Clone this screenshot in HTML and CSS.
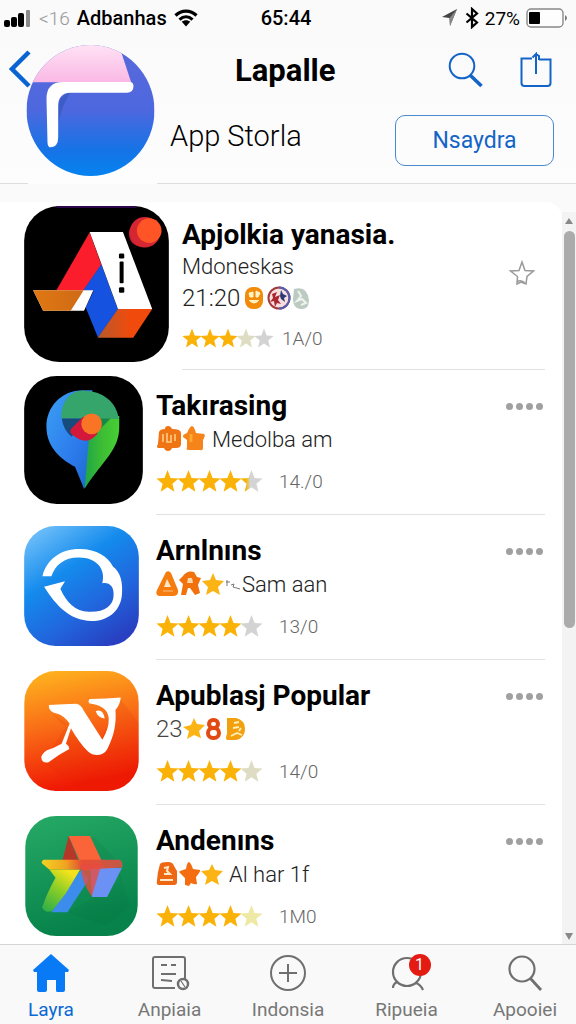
FILE: index.html
```html
<!DOCTYPE html>
<html lang="id">
  <head>
    <meta charset="UTF-8" />
    <meta name="viewport" content="width=device-width, initial-scale=1.0" />
    <title>Lapalle</title>
    <link rel="stylesheet" href="styles.css">
  </head>

  <body>
    <svg class="sprite" aria-hidden="true">
      <defs>
        <linearGradient id="half"><stop offset="0.250" stop-color="#f5b400" /><stop offset="0.450" stop-color="#d4d4d4" /></linearGradient>
        <symbol id="star" viewBox="0 0 22 22">
          <path d="M11 0l2.900 7.600 7.700.6-5.900 5 1.900 7.600L11 16.600l-6.600 4.200 1.900-7.600L.4 8.200l7.700-.6z" />
        </symbol>
      </defs>
    </svg>

    <div class="status-bar">
      <div class="status-left">
        <svg width="28" height="18" viewBox="0 0 28 18">
          <rect x="0" y="11" width="6" height="7" rx="2" />
          <rect x="7" y="8" width="6" height="10" rx="2" />
          <rect x="14" y="4" width="6" height="14" rx="2" />
          <rect x="22" y="1" width="4" height="17" rx="1" fill="#8a8a8a" />
        </svg>
        <span class="signal">&lt;16</span>
        <span class="carrier">Adbanhas</span>
        <svg width="24" height="18" viewBox="0 0 24 18" fill="none" stroke="#000" stroke-width="3.200">
          <path d="M1.500 6.500C7.500.7 16.500.7 22.500 6.500" />
          <path d="M5.500 10.600c4-3.600 9-3.600 13 0" />
          <path d="M7.800 12.800L12 17.500l4.200-4.700c-2.500-2-5.900-2-8.400 0z" fill="#000" stroke="none" />
        </svg>
      </div>
      <div class="clock">65:44</div>
      <div class="status-right">
        <svg width="18" height="20" viewBox="0 0 18 20">
          <path d="M1 9L16 1 9 18 8.500 10z" fill="#444" /><path d="M16 1L9 18l-.5-8z" fill="#888" />
        </svg>
        <svg width="14" height="22" viewBox="0 0 14 22" fill="none" stroke="#000" stroke-width="2.200">
          <path d="M1.500 6.500l10.500 9-5 4.500V2l5 4.500-10.500 9" />
        </svg>
        <span>27%</span>
        <svg width="42" height="20" viewBox="0 0 42 20">
          <rect x="1" y="1" width="36" height="18" rx="4" fill="#fdfdfd" stroke="#888" stroke-width="1.400" />
          <rect x="3" y="4" width="11" height="12" rx="1" />
          <path d="M39 7q4 3 0 6z" fill="#777" />
        </svg>
      </div>
    </div>

    <header>
      <div class="brand">
        <svg class="avatar" viewBox="80 134 384 393">
          <defs>
            <linearGradient id="av" x1="0" y1="0" x2="0" y2="1">
              <stop offset="0.200" stop-color="#5568dc" /><stop offset="0.500" stop-color="#4d68df" /><stop offset="0.800" stop-color="#1673e6" /><stop offset="1" stop-color="#0583f0" />
            </linearGradient>
            <linearGradient id="pink" x1="0" y1="0" x2="0" y2="1">
              <stop offset="0" stop-color="#ffe2f4" /><stop offset="1" stop-color="#fab8e5" />
            </linearGradient>
            <clipPath id="avclip"><ellipse cx="272" cy="330.500" rx="192" ry="196.500" /></clipPath>
          </defs>
          <g clip-path="url(#avclip)">
            <rect x="80" y="134" width="384" height="393" fill="url(#av)" />
            <path d="M80 134h277l37 112H80z" fill="url(#pink)" />
            <path d="M177 315q0-28 34-38l-16 30q-10 20-19 60z" fill="#3558bd" opacity="0.700" />
          </g>
          <path d="M140 295q0-50 50-50h198q12-2 13 12 0 20-20 20H210q-35 2-35 40v95q0 26-22 29-9 0-10-14z" fill="#fff" />
        </svg>
        <button class="back" aria-label="Back">
          <svg width="22" height="38" viewBox="0 0 22 38" fill="none" stroke="#0a63d2" stroke-width="4.500"><path d="M20 2L3 19l17 17" /></svg>
        </button>
      </div>
      <div class="header-main">
        <div class="nav-row">
          <h1>Lapalle</h1>
          <div class="actions">
            <button aria-label="Search">
              <svg width="36" height="36" viewBox="0 0 36 36" fill="none" stroke="#1464c8">
                <circle cx="14" cy="14" r="12.300" stroke-width="2" /><path d="M22.500 23.500l11 10.500" stroke-width="3.600" />
              </svg>
            </button>
            <button aria-label="Share">
              <svg width="32" height="36" viewBox="0 0 32 36" fill="none" stroke="#1464c8" stroke-width="2">
                <path d="M12 6.500H1.500V31q0 3 3 3h23q3 0 3-3V7.500H19" /><path d="M16 22V2l-3.500 3.500M16 2l3 2v4" />
              </svg>
            </button>
          </div>
        </div>
        <div class="profile-row">
          <p>App Storla</p>
          <button class="outline-btn">Nsaydra</button>
        </div>
      </div>
    </header>

    <main>
      <ul class="app-list">
        <li class="app featured">
          <svg class="app-icon" viewBox="70 33 435 469">
            <defs>
              <linearGradient id="or"><stop offset="0" stop-color="#b65a2c" /><stop offset="0.600" stop-color="#f04a0c" /></linearGradient>
              <linearGradient id="gold"><stop offset="0" stop-color="#e07812" /><stop offset="1" stop-color="#cf6a16" /></linearGradient>
            </defs>
            <rect x="70" y="33" width="435" height="469" rx="105" />
            <path d="M167 36h240" stroke="#3b0b63" stroke-width="4" />
            <path d="M267 112l35 98-54 78h-82z" fill="#fb1d2c" />
            <path d="M302 208l50 136-60 84-37-90 24-50h-32z" fill="#1552e0" />
            <path d="M267 111h100l88 232H352z" fill="#fff" />
            <path d="M352 343h103l-57 86H291z" fill="url(#or)" />
            <path d="M97 286h181l-28 62H127z" fill="#fff" />
            <path d="M97 286h152l-39 62h-83z" fill="url(#gold)" />
            <rect x="355" y="176" width="16" height="15" rx="4" />
            <rect x="357" y="200" width="12" height="65" rx="3" />
            <rect x="355" y="277" width="16" height="17" rx="4" />
            <path d="M440 76q-56 8-55 40 0 38 45 41z" fill="#c3153c" />
            <circle cx="433" cy="112" r="46" fill="#d52632" />
            <circle cx="446" cy="107" r="37" fill="#ff5526" />
          </svg>
          <div class="app-body">
            <div class="info">
              <h2>Apjolkia yanasia.</h2>
              <p class="meta">Mdoneskas</p>
              <p class="meta second">21:20
                <svg width="72" height="24" viewBox="-4 0 72 24">
                  <rect x="1" y="1" width="18" height="22" rx="8" fill="#f28a0a" />
                  <path d="M5 7l4-1v5H6zM12 5l4 2-2 4h-2zM5 14q5 6 10 0" fill="#fff3c4" stroke="#fff3c4" />
                  <circle cx="35" cy="12" r="10.500" fill="#f5dfe0" stroke="#a33a3c" stroke-width="2" />
                  <path d="M35 1.500a10.500 10.500 0 0 1 0 21" fill="none" stroke="#555faf" stroke-width="2" />
                  <path d="M28 8l5-2-2 5 5-2-2 5 3 4-4-1-2 4-1-6-4 1 3-4z" fill="#ab2730" /><path d="M37 4l2 4 4 2-3 2 1 4-4-3-1-3z" fill="#2c3978" />
                  <path d="M50 3q13-4 15 11 0 10-9 9-7-1-7-10z" fill="#bccbc1" />
                  <path d="M54 5l3 5-4 5 5-2 4 4-5 2" fill="none" stroke="#eef3ee" stroke-width="2" />
                </svg>
              </p>
              <div class="rating">
                <span class="stars" role="img" aria-label="3 of 5"><svg><use href="#star" /></svg><svg><use href="#star" /></svg><svg><use href="#star" /></svg><svg class="pale"><use href="#star" /></svg><svg class="off"><use href="#star" /></svg></span>
                <span>1A/0</span>
              </div>
            </div>
            <button class="fav" aria-label="Favourite">
              <svg width="26" height="26" viewBox="0 0 26 26" fill="none" stroke="#999" stroke-width="1.500">
                <path d="M13 2l3 8.500 8.500.5-6.500 5.500-1 7.500-5-2-4 2 .5-7.500L1.500 11l8.500-.5z" /><path d="M8 22q4-3 8 1" />
              </svg>
            </button>
          </div>
        </li>

        <li class="app large">
          <svg class="app-icon" viewBox="70 30 357 385">
            <defs>
              <linearGradient id="pinblue" x1="0" y1="0" x2="1" y2="1"><stop offset="0" stop-color="#3aa0f4" /><stop offset="0.600" stop-color="#2d7bec" /><stop offset="1" stop-color="#1a66cc" /></linearGradient>
              <linearGradient id="pingreen" x1="0" y1="0" x2="1" y2="0"><stop offset="0" stop-color="#1ea548" /><stop offset="0.500" stop-color="#3dbd34" /><stop offset="1" stop-color="#48cf35" /></linearGradient>
            </defs>
            <rect x="70" y="30" width="357" height="385" rx="98" />
            <path d="M248 73c-70 0-111 54-111 108 0 65 45 100 86 122l27 66 25-40V73z" fill="url(#pinblue)" />
            <path d="M264 225l-12 144c55-85 104-115 104-186V150H265z" fill="url(#pingreen)" />
            <path d="M182 158c-3-40 22-85 66-84 60 0 100 35 107 85z" fill="#35a56b" />
            <path d="M183 158h70l-40 55q-25-20-30-55z" fill="#174b7b" />
            <path d="M250 158h80l-45 45z" fill="#178747" />
            <path d="M213 187l35-35 43 50c-18 25-45 34-79 2-5-7-5-10 1-17z" fill="#d3183b" />
            <circle cx="273" cy="174" r="31" fill="#fa7426" />
          </svg>
          <div class="app-body">
            <div class="info">
              <h2>Takırasing</h2>
              <p class="meta">
                <svg width="50" height="26" viewBox="0 0 50 26">
                  <path d="M3 6q1-3 6-3 0-3 3-3t4 3q9 0 9 4v11q0 4-5 4h-4q-1 3-4 3t-4-3H2q-2-1 0-4z" fill="#ee7414" />
                  <path d="M7 8v8M11 7v9h4V9M19 8v7" stroke="#ffd08c" stroke-width="1.500" fill="none" />
                  <path d="M36 0q2 0 4 7l8 1q2 1-1 6v8q0 3-3 2H32q-2 0-1-3v-7l-4-3q-1-2 4-4 3-7 5-7z" fill="#f6841b" />
                  <path d="M35 8v8" stroke="#fba92f" stroke-width="3" />
                </svg>
                <span class="gap-text">Medolba am</span>
              </p>
              <div class="rating">
                <span class="stars" role="img" aria-label="4 of 5"><svg><use href="#star" /></svg><svg><use href="#star" /></svg><svg><use href="#star" /></svg><svg><use href="#star" /></svg><svg class="half"><use href="#star" /></svg></span>
                <span>14./0</span>
              </div>
            </div>
            <button class="more" aria-label="More"><i></i><i></i><i></i><i></i></button>
          </div>
        </li>

        <li class="app">
          <svg class="app-icon" viewBox="72 32 345 361">
            <defs><linearGradient id="sky" x1="0.100" y1="0" x2="0.750" y2="1"><stop offset="0" stop-color="#75c2fa" /><stop offset="0.380" stop-color="#148bed" /><stop offset="0.700" stop-color="#2166dd" /><stop offset="1" stop-color="#283fc1" /></linearGradient></defs>
            <rect x="72" y="32" width="345" height="361" rx="94" fill="url(#sky)" />
            <path d="M127 183C140 130 185 100 240 101c50 0 85 24 99 53 25 18 30 52 27 86-5 50-45 78-92 78-65-2-105-45-142-103l63-17-14 23c18 41 45 68 85 69 48 2 75-20 75-50 2-25-12-40-34-36 12-44-20-77-69-77-45-1-72 22-84 56z" fill="#fff" />
          </svg>
          <div class="app-body">
            <div class="info">
              <h2>Arnlnıns</h2>
              <p class="meta">
                <svg width="86" height="26" viewBox="0 0 86 26">
                  <path d="M10 1q3-2 5 1l7 17q1 6-5 6H3q-4-1-2-6z" fill="#f57c0e" /><path d="M11 8l4 8H8z" fill="#ffe7c8" /><path d="M7 20h10" stroke="#ffc184" />
                  <path d="M27 5q4-6 11-4l3 5 4 1-3 7 2 8-5 2-5-7h-2l-2 7h-5l2-11-4-4z" fill="#f1710d" /><path d="M32 7h4l1 5h-6z" fill="#ffd7a6" />
                  <path d="M57 2l3 7 8 1-6 6 2 8-7-4-7 4 2-8-6-6 8-1z" fill="#fbb414" />
                  <path d="M71 9v6M70 11h4M75 14l3-1-1 3 7 2" stroke="#777" fill="none" />
                </svg>
                <span>Sam aan</span>
              </p>
              <div class="rating">
                <span class="stars" role="img" aria-label="4 of 5"><svg><use href="#star" /></svg><svg><use href="#star" /></svg><svg><use href="#star" /></svg><svg><use href="#star" /></svg><svg class="off"><use href="#star" /></svg></span>
                <span>13/0</span>
              </div>
            </div>
            <button class="more" aria-label="More"><i></i><i></i><i></i><i></i></button>
          </div>
        </li>

        <li class="app">
          <svg class="app-icon" viewBox="72 35 343 359">
            <defs>
              <linearGradient id="fire" x1="0" y1="0" x2="0.200" y2="1"><stop offset="0" stop-color="#ffb81f" /><stop offset="0.500" stop-color="#f96b16" /><stop offset="1" stop-color="#f01904" /></linearGradient>
              <clipPath id="fireclip"><rect x="72" y="35" width="343" height="359" rx="94" /></clipPath>
            </defs>
            <g clip-path="url(#fireclip)">
              <rect x="72" y="35" width="343" height="359" fill="url(#fire)" />
              <path d="M148 158l55 35-75 113 115 90h172V190l-55-70-80 160z" fill="#df2500" opacity="0.120" />
            </g>
            <path d="M146 137q45-3 82-4 15 3 22 20l56 88q20-35 19-63-2-39-57-46-7-5 0-13 50-1 93-5-2 22-16 38c3 35-2 75-25 118-12 20-40 22-57 6q-27-27-51-70l-15 47q9 5 10 15-35 18-62 40-20 4-22-15 2-10 17-21 20-5 44-19l24-61q-18-24-36-29-25-4-26-20z" fill="#fff" />
            <path d="M286 155q22-8 27 22-22-2-27-22z" fill="#fff" />
          </svg>
          <div class="app-body">
            <div class="info">
              <h2>Apublasj Popular</h2>
              <p class="meta muted">23
                <svg width="64" height="24" viewBox="0 0 64 24">
                  <path d="M11 1l3 6 8 1-6 6 2 7-7-3-7 4 2-8-6-4 8-2z" fill="#fbb414" />
                  <rect x="26" y="3" width="9" height="8" rx="4" fill="none" stroke="#e24a13" stroke-width="4" />
                  <rect x="25" y="11" width="11" height="10" rx="5" fill="none" stroke="#e24a13" stroke-width="4" />
                  <path d="M44 1h9q9 2 9 11t-9 11h-9q-2-2 0-6V6z" fill="#f2a00f" />
                  <path d="M51 6l5-1M50 11l6-1M48 19l6-3 5 2M56 14l2-3" stroke="#ffefb5" stroke-width="1.800" fill="none" />
                </svg>
              </p>
              <div class="rating">
                <span class="stars" role="img" aria-label="4 of 5"><svg><use href="#star" /></svg><svg><use href="#star" /></svg><svg><use href="#star" /></svg><svg><use href="#star" /></svg><svg class="pale"><use href="#star" /></svg></span>
                <span>14/0</span>
              </div>
            </div>
            <button class="more" aria-label="More"><i></i><i></i><i></i><i></i></button>
          </div>
        </li>

        <li class="app">
          <svg class="app-icon" viewBox="72 37 342 365">
            <defs>
              <linearGradient id="leaf" x1="0" y1="0" x2="0.300" y2="1"><stop offset="0" stop-color="#27aa66" /><stop offset="1" stop-color="#06824a" /></linearGradient>
              <linearGradient id="lime" x1="0.600" y1="0" x2="0" y2="1"><stop offset="0" stop-color="#f4e21d" /><stop offset="0.400" stop-color="#8fcf26" /><stop offset="1" stop-color="#27ab4b" /></linearGradient>
              <linearGradient id="band"><stop offset="0" stop-color="#ffd51c" /><stop offset="0.300" stop-color="#faa51f" /><stop offset="0.500" stop-color="#e74d34" /><stop offset="1" stop-color="#ce5548" /></linearGradient>
            </defs>
            <rect x="72" y="37" width="342" height="365" rx="94" fill="url(#leaf)" />
            <path d="M205 98l80 4 65 72 10 65-160 92 120 40 70-60-30-100z" fill="#05683b" opacity="0.120" />
            <path d="M204 98l-20 78 55 10z" fill="#b63628" />
            <path d="M204 98h65l49 104h-68z" fill="#fb6339" />
            <path d="M270 195h96l-45 88h-46z" fill="#6c91f5" />
            <path d="M242 199l24 30-66 101h-48l45-70z" fill="#3b8ceb" />
            <path d="M145 200h94l-44 73-42 54q-20 6-30-12 18-50 41-90z" fill="url(#lime)" />
            <path d="M130 170h230q9 4 7 24l-112 6H145q-12-10-23-20 0-9 8-10z" fill="url(#band)" opacity="0.950" />
            <path d="M239 184h65l-30 98q-31-44-35-98z" fill="#e64c42" opacity="0.800" />
          </svg>
          <div class="app-body">
            <div class="info">
              <h2>Andenıns</h2>
              <p class="meta">
                <svg width="67" height="26" viewBox="0 0 67 26">
                  <path d="M4 3q1-2 8-2 5 0 6 4l3 5v11q0 3-3 3H3q-3 0-2-5l1-8z" fill="#ee6712" /><path d="M8 7l4-1-1 4 3 3H8M4 19h13" fill="none" stroke="#ffe8c5" stroke-width="2" />
                  <path d="M33 1q2 1 4 7l7 1q1 1-4 7l1 7q-2 1-6-1l-2 3-4-1v-7l-6-6q0-1 7-3 1-7 3-7z" fill="#f46d10" />
                  <path d="M56 3l3 6 8 1-6 6 2 8-7-4-7 4 2-8-6-6 8-1z" fill="#fbb414" />
                </svg>
                <span class="gap-text">Al har 1f</span>
              </p>
              <div class="rating">
                <span class="stars" role="img" aria-label="4 of 5"><svg><use href="#star" /></svg><svg><use href="#star" /></svg><svg><use href="#star" /></svg><svg><use href="#star" /></svg><svg class="cream"><use href="#star" /></svg></span>
                <span>1M0</span>
              </div>
            </div>
            <button class="more" aria-label="More"><i></i><i></i><i></i><i></i></button>
          </div>
        </li>
      </ul>

      <div class="scrollbar" aria-hidden="true">
        <span class="arrow up"></span>
        <span class="thumb"></span>
        <span class="arrow down"></span>
      </div>
    </main>

    <nav class="tab-bar">
      <a href="#" class="active">
        <svg width="40" height="40" viewBox="0 0 40 40"><path d="M20 1l18 16-1 2h-3v18q0 2-2 2h-6q-1 0-1-2V27h-9v10q0 2-2 2H8q-2 0-2-2V19H3l-1-2z" fill="#087af5" /></svg>
        Layra
      </a>
      <a href="#">
        <svg width="40" height="40" viewBox="0 0 40 40" fill="none" stroke="#6f6f6f" stroke-width="2">
          <path d="M25 35H5q-2 0-2-2V6q0-2 2-2h28q2 0 2 2v20" /><path d="M11 12h6M21 12h5M11 21h15M11 27l11 1" />
          <circle cx="33" cy="31" r="5" stroke-width="2.500" /><path d="M31 28l4 6" stroke-width="1.200" />
        </svg>
        Anpiaia
      </a>
      <a href="#">
        <svg width="40" height="40" viewBox="0 0 40 40" fill="none" stroke="#6f6f6f" stroke-width="2"><circle cx="20" cy="20" r="17" /><path d="M20 11v18M11 20h18" /></svg>
        Indonsia
      </a>
      <a href="#">
        <svg width="40" height="40" viewBox="0 0 40 40" fill="none" stroke="#6f6f6f" stroke-width="2.200"><circle cx="20" cy="19" r="14" /><path d="M10 29q-4 2-4 6M29 30q5 2 7 7" /></svg>
        Ripueia
        <span class="badge">1</span>
      </a>
      <a href="#">
        <svg width="40" height="40" viewBox="0 0 40 40" fill="none" stroke="#6f6f6f" stroke-width="2.200"><circle cx="17" cy="16" r="12.500" /><path d="M25.500 25.500L36 37" stroke-width="2.800" /></svg>
        Apooiei
      </a>
    </nav>
  </body>
</html>
```

FILE: styles.css
```css
* {
  box-sizing: border-box;
}

body {
  margin: 0;
  min-height: 100vh;
  display: flex;
  flex-direction: column;
  font-family: Roboto, "Liberation Sans", sans-serif;
  background: #fafafa;
  color: #000;
}

h1,
h2,
p,
ul {
  margin: 0;
  padding: 0;
}

button {
  padding: 0;
  border: none;
  background: none;
  font-family: inherit;
  cursor: pointer;
}

svg {
  display: block;
  flex-shrink: 0;
}

.sprite {
  position: absolute;
  width: 0;
  height: 0;
}

/* Status bar */
.status-bar {
  display: grid;
  grid-template-columns: 1fr auto 1fr;
  align-items: center;
  height: 36px;
  padding: 0 8px 0 4px;
  font-size: 19px;
}

.status-left,
.status-right {
  display: flex;
  align-items: center;
  gap: 7px;
}

.status-right {
  gap: 6px;
  justify-content: flex-end;
}

.signal {
  color: #999;
  font-weight: 300;
}

.carrier,
.clock {
  font-size: 20px;
  font-weight: 500;
}

/* Header */
header {
  display: flex;
  height: 148px;
  background: linear-gradient(#fafafa, #fdfdfd);
}

.brand {
  position: relative;
  width: 157px;
  padding: 9px 0 0 26px;
}

/* divider piece to the left of the avatar */
.brand::after {
  content: "";
  position: absolute;
  left: 0;
  bottom: 0;
  width: 28px;
  border-bottom: 1px solid #ddd;
}

.avatar {
  width: 129px;
  height: 131px;
}

.back {
  position: absolute;
  top: 14px;
  left: 9px;
}

.header-main {
  flex: 1;
  border-bottom: 1px solid #ddd;
  padding: 0 22px 0 13px;
}

.nav-row,
.profile-row {
  display: flex;
  align-items: center;
  justify-content: space-between;
}

.nav-row {
  height: 68px;
  padding-left: 65px;
}

h1 {
  font-size: 31px;
  font-weight: 700;
}

.actions {
  display: flex;
  gap: 36px;
  padding-right: 2px;
}

.profile-row {
  height: 72px;
}

.profile-row p {
  font-size: 29px;
  font-weight: 300;
  line-height: 36px;
  padding-bottom: 8px;
}

.outline-btn {
  width: 159px;
  height: 51px;
  border: 1px solid #4a8ad0;
  border-radius: 10px;
  color: #1464c8;
  font-size: 23px;
}

/* App list */
main {
  flex: 1;
  display: flex;
  padding-top: 18px;
}

.app-list {
  flex: 1;
  list-style: none;
  background: #fff;
  border-top-right-radius: 16px;
}

.app {
  display: flex;
  height: 145px;
  padding: 0 17px 0 24px;
}

.app-icon {
  width: 115px;
  height: 120px;
  margin: 11px 17px 0 0;
}

.large .app-icon {
  width: 119px;
  height: 128px;
  margin: 6px 13px 0 0;
}

.featured {
  height: 168px;
}

.featured .app-icon {
  width: 145px;
  height: 156px;
  margin: 4px 13px 0 0;
}

.app-body {
  flex: 1;
  display: flex;
  justify-content: space-between;
  padding-top: 19px;
  border-bottom: 1px solid #e2e2e2;
}

.featured .app-body {
  padding-top: 16px;
}

.app:last-child {
  height: 139px;
}

.app:last-child .app-body {
  border-bottom: none;
}

h2 {
  font-size: 28px;
  line-height: 34px;
  font-weight: 700;
}

.meta {
  display: flex;
  align-items: center;
  height: 28px;
  margin-top: 2px;
  font-size: 22px;
  font-weight: 300;
  color: #222;
}

.featured .meta {
  margin-top: 0;
}

.featured .second {
  margin-top: 4px;
  font-size: 24px;
}

.muted {
  font-size: 24px;
  color: #444;
}

.gap-text {
  margin-left: 6px;
}

.rating {
  display: flex;
  align-items: center;
  gap: 18px;
  height: 24px;
  margin-top: 16px;
  font-size: 19px;
  font-weight: 300;
  color: #666;
}

.featured .rating {
  gap: 10px;
  margin-top: 14px;
}

.stars {
  display: flex;
  fill: #fbb208;
}

.stars svg {
  width: 23px;
  height: 23px;
  margin-right: -2px;
}

.featured .stars svg {
  width: 20px;
}

.stars .off {
  fill: #d3d3d3;
}

.stars .pale {
  fill: #deddc4;
}

.stars .cream {
  fill: #eeeaa5;
}

.stars .half {
  fill: url(#half);
}

.fav {
  align-self: flex-start;
  margin: 42px 10px 0 0;
}

.more {
  display: flex;
  align-self: flex-start;
  gap: 3px;
  padding: 14px 2px;
}

.more i {
  width: 7px;
  height: 7px;
  border-radius: 50%;
  background: #a0a0a0;
}

/* Scrollbar */
.scrollbar {
  display: flex;
  flex-direction: column;
  align-items: center;
  width: 14px;
  margin-top: 10px;
  padding: 6px 0 4px;
  background: #f3f3f3;
}

.thumb {
  width: 11px;
  height: 55%;
  margin-top: 7px;
  border-radius: 6px;
  background: #ababab;
}

.arrow {
  border: 4px solid transparent;
}

.up {
  border-top: none;
  border-bottom: 6px solid #888;
}

.down {
  margin-top: auto;
  border-bottom: none;
  border-top: 7px solid #888;
}

/* Tab bar */
.tab-bar {
  display: flex;
  justify-content: space-between;
  height: 80px;
  padding: 0 14px;
  border-top: 1px solid #d5d5d5;
  background: #f8f9f8;
}

.tab-bar a {
  position: relative;
  width: 74px;
  display: flex;
  flex-direction: column;
  align-items: center;
  gap: 6px;
  padding-top: 8px;
  color: #777;
  font-size: 19px;
  line-height: 22px;
  text-decoration: none;
}

.tab-bar .active {
  color: #0a68d6;
}

.badge {
  position: absolute;
  top: 9px;
  left: 50%;
  width: 22px;
  height: 22px;
  margin-left: 2px;
  border-radius: 50%;
  background: #e41b13;
  color: #fff;
  font-size: 16px;
  text-align: center;
}
```
